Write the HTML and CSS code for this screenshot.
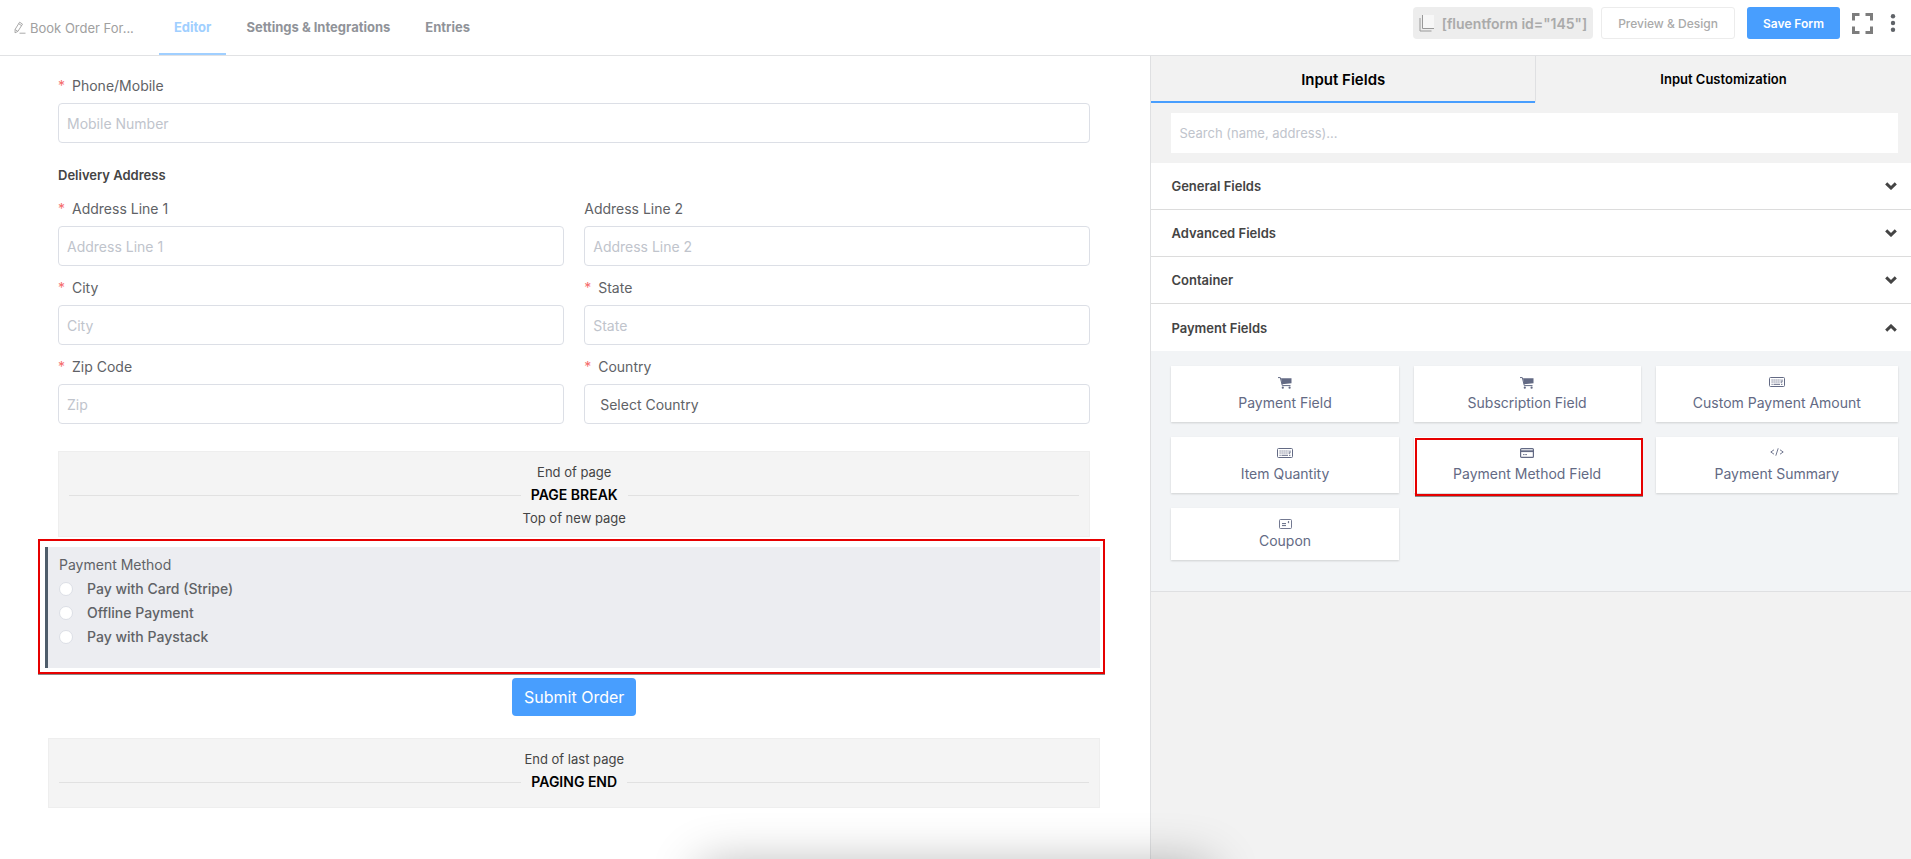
FILE: index.html
```html
<!DOCTYPE html>
<html lang="en">
<head>
    <meta charset="UTF-8">
    <meta name="viewport" content="width=device-width, initial-scale=1.0">
    <title>Book Order Form - Editor</title>
    <link rel="stylesheet" href="styles.css">
</head>
<body>
    <!-- Shared icons -->
    <svg class="icon-defs" width="0" height="0" aria-hidden="true">
        <symbol id="icon-cart" viewBox="0 0 14 12">
            <path d="M0 .6h2.3L4.3 8.6h8.2" fill="none" stroke="currentColor" stroke-width="1"/>
            <path d="M3 1.2h10.5v5L4 7.2z" fill="currentColor"/>
            <circle cx="4.8" cy="10.7" r="1.1" fill="currentColor"/>
            <circle cx="11.6" cy="10.7" r="1.1" fill="currentColor"/>
        </symbol>
        <symbol id="icon-keyboard" viewBox="0 0 16 10">
            <rect x=".5" y=".5" width="15" height="9" rx="1" fill="none" stroke="currentColor"/>
            <path d="M2.5 3h9M2.5 5h9" fill="none" stroke="currentColor" stroke-dasharray="1.2 .8"/>
            <path d="M13 2.5v2.7h-1M2.5 7.3h1.2M4.5 7.3h6.5M12 7.3h1.4" fill="none" stroke="currentColor"/>
        </symbol>
        <symbol id="icon-card" viewBox="0 0 14 10">
            <rect x=".6" y=".6" width="12.8" height="8.8" rx="1" fill="none" stroke="currentColor" stroke-width="1.2"/>
            <path d="M1 3.2h12" stroke="currentColor" stroke-width="1.8"/>
            <path d="M3 6.6h1.6M5.2 6.6h1.8" stroke="currentColor" stroke-width=".9"/>
        </symbol>
        <symbol id="icon-code" viewBox="0 0 14 8">
            <path d="M4 1.8L.8 4 4 6.2M10 1.8L13.2 4 10 6.2M8.2.3L5.8 7.7" fill="none" stroke="currentColor" stroke-width=".9"/>
        </symbol>
        <symbol id="icon-coupon" viewBox="0 0 13 10">
            <rect x=".5" y=".5" width="12" height="9" rx="1" fill="none" stroke="currentColor" stroke-width=".9"/>
            <path d="M3 4.6h4M3 6.6h4" stroke="currentColor" stroke-width="1"/>
            <path d="M9.6 2v2.2M8.8 3.2h1" stroke="currentColor" stroke-width=".9"/>
        </symbol>
        <symbol id="icon-chevron" viewBox="0 0 12 8">
            <path d="M1.2 1.4L6 6l4.8-4.6" fill="none" stroke="currentColor" stroke-width="3"/>
        </symbol>
    </svg>

    <header class="topbar">
        <button class="form-name" type="button">
            <svg width="12" height="13" viewBox="0 0 12 13" fill="none" stroke="currentColor" stroke-width=".9">
                <path d="M5.6 1.2l2.9 1.9-4.6 7.3-2.9 1.4.1-3.4zM4.7 2.7l2.8 1.9M1.2 8.6l2.6 1.7M5.5 12.2h6"/>
            </svg>
            Book Order For...
        </button>
        <nav class="topnav">
            <a class="topnav-link active" href="#">Editor</a>
            <a class="topnav-link" href="#">Settings &amp; Integrations</a>
            <a class="topnav-link" href="#">Entries</a>
        </nav>
        <div class="actions">
            <button class="shortcode" type="button">
                <svg width="16" height="18" viewBox="0 0 16 18">
                    <path d="M4 1h11v13H4z" fill="#f7f7f7"/>
                    <path d="M3.5 1v13.5H15M1 4v13h11.5" fill="none" stroke="#999" stroke-width="1"/>
                </svg>
                [fluentform id="145"]
            </button>
            <button class="btn btn-plain" type="button">Preview &amp; Design</button>
            <button class="btn btn-primary" type="button">Save Form</button>
            <button class="icon-btn" type="button" aria-label="Full screen">
                <svg width="21" height="21" viewBox="0 0 21 21" fill="none" stroke="#7d7d7d" stroke-width="3">
                    <path d="M1.5 7.5v-6h6M13.5 1.5h6v6M19.5 13.5v6h-6M7.5 19.5h-6v-6"/>
                </svg>
            </button>
            <button class="icon-btn" type="button" aria-label="More">
                <svg width="6" height="18" viewBox="0 0 6 18" fill="#5f6368">
                    <circle cx="3" cy="2.3" r="2.2"/><circle cx="3" cy="9" r="2.2"/><circle cx="3" cy="15.7" r="2.2"/>
                </svg>
            </button>
        </div>
    </header>

    <main class="workspace">
        <form class="editor">
            <div class="fields">
                <div class="field">
                    <label class="required" for="phone">Phone/Mobile</label>
                    <input type="text" id="phone" placeholder="Mobile Number">
                </div>

                <h2 class="group-title">Delivery Address</h2>
                <div class="address">
                    <div class="field">
                        <label class="required" for="line1">Address Line 1</label>
                        <input type="text" id="line1" placeholder="Address Line 1">
                    </div>
                    <div class="field">
                        <label for="line2">Address Line 2</label>
                        <input type="text" id="line2" placeholder="Address Line 2">
                    </div>
                    <div class="field">
                        <label class="required" for="city">City</label>
                        <input type="text" id="city" placeholder="City">
                    </div>
                    <div class="field">
                        <label class="required" for="state">State</label>
                        <input type="text" id="state" placeholder="State">
                    </div>
                    <div class="field">
                        <label class="required" for="zip">Zip Code</label>
                        <input type="text" id="zip" placeholder="Zip">
                    </div>
                    <div class="field">
                        <label class="required" for="country">Country</label>
                        <select id="country">
                            <option>Select Country</option>
                        </select>
                    </div>
                </div>

                <div class="page-step">
                    <p>End of page</p>
                    <strong class="step-title">PAGE BREAK</strong>
                    <p>Top of new page</p>
                </div>
            </div>

            <div class="highlight">
                <fieldset class="payment">
                    <legend>Payment Method</legend>
                    <label><input type="radio" name="method">Pay with Card (Stripe)</label>
                    <label><input type="radio" name="method">Offline Payment</label>
                    <label><input type="radio" name="method">Pay with Paystack</label>
                </fieldset>
            </div>

            <button class="submit" type="button">Submit Order</button>

            <div class="page-step page-end">
                <p>End of last page</p>
                <strong class="step-title">PAGING END</strong>
            </div>
        </form>

        <aside class="sidebar">
            <div class="tabs">
                <button class="tab active" type="button">Input Fields</button>
                <button class="tab" type="button">Input Customization</button>
            </div>
            <div class="search">
                <input type="text" aria-label="Search fields" placeholder="Search (name, address)...">
            </div>
            <button class="section" type="button">General Fields
                <svg width="12" height="8"><use href="#icon-chevron"/></svg>
            </button>
            <button class="section" type="button">Advanced Fields
                <svg width="12" height="8"><use href="#icon-chevron"/></svg>
            </button>
            <button class="section" type="button">Container
                <svg width="12" height="8"><use href="#icon-chevron"/></svg>
            </button>
            <button class="section open" type="button">Payment Fields
                <svg width="12" height="8"><use href="#icon-chevron"/></svg>
            </button>
            <div class="cards">
                <button class="card" type="button">
                    <svg width="14" height="12"><use href="#icon-cart"/></svg>
                    Payment Field
                </button>
                <button class="card" type="button">
                    <svg width="14" height="12"><use href="#icon-cart"/></svg>
                    Subscription Field
                </button>
                <button class="card" type="button">
                    <svg width="16" height="10"><use href="#icon-keyboard"/></svg>
                    Custom Payment Amount
                </button>
                <button class="card" type="button">
                    <svg width="16" height="10"><use href="#icon-keyboard"/></svg>
                    Item Quantity
                </button>
                <button class="card marked" type="button">
                    <svg width="14" height="10"><use href="#icon-card"/></svg>
                    Payment Method Field
                </button>
                <button class="card" type="button">
                    <svg width="14" height="8"><use href="#icon-code"/></svg>
                    Payment Summary
                </button>
                <button class="card compact" type="button">
                    <svg width="13" height="10"><use href="#icon-coupon"/></svg>
                    Coupon
                </button>
            </div>
        </aside>
    </main>
    <div class="dock-shadow"></div>
</body>
</html>
```

FILE: styles.css
```css
/* General Styles */
* {
    box-sizing: border-box;
}

body {
    display: flex;
    flex-direction: column;
    min-height: 100vh;
    margin: 0;
    font-family: Inter, "Liberation Sans", sans-serif;
    font-size: 14px;
    color: #606266;
    background: #fff;
    overflow: hidden;
}

button, input, select {
    font: inherit;
    color: inherit;
}

button {
    padding: 0;
    border: none;
    background: none;
    cursor: pointer;
}

p, h2 {
    margin: 0;
}

.icon-defs {
    position: absolute;
}

/* Top Bar */
.topbar {
    display: flex;
    height: 56px;
    padding: 0 15px 0 14px;
    border-bottom: 1px solid #e1e2e4;
    font-size: 13px;
}

.form-name {
    display: flex;
    align-items: center;
    gap: 4px;
    margin-right: 25px;
    color: #a0a0a0;
}

.topnav {
    display: flex;
    gap: 5px;
}

.topnav-link {
    padding: 0 15px;
    line-height: 54px;
    font-weight: 700;
    color: #909399;
    text-decoration: none;
}

.topnav-link.active {
    color: #a0cfff;
    border-bottom: 2px solid #a0cfff;
    height: 55px;
}

.actions {
    display: flex;
    align-items: center;
    gap: 8px;
    height: 46px;
    margin-left: auto;
}

.shortcode {
    display: flex;
    align-items: center;
    gap: 7px;
    height: 32px;
    padding: 0 6px;
    border-radius: 4px;
    background: #ededed;
    color: #aaa;
    font-size: 14px;
    font-weight: 600;
}

.btn {
    height: 32px;
    padding: 0 16px;
    border-radius: 3px;
    font-size: 12px;
    font-weight: 500;
}

.btn-plain {
    border: 1px solid #ececec;
    color: #aaa;
}

.btn-primary {
    margin: 0 4px;
    background: #489efe;
    color: #fff;
    font-weight: 600;
}

.icon-btn {
    display: flex;
    margin-right: 9px;
}

.icon-btn:last-child {
    margin-right: 0;
}

/* Workspace */
.workspace {
    display: flex;
    flex: 1;
}

.editor {
    flex: 1;
    padding: 20px 50px 0 48px;
}

.fields {
    padding: 0 10px;
}

.field {
    display: flex;
    flex-direction: column;
    gap: 7px;
}

.field label {
    line-height: 20px;
}

.required::before {
    content: "*";
    display: inline-block;
    width: 14px;
    color: #f56c6c;
}

.field input, .field select {
    width: 100%;
    height: 40px;
    padding: 0 8px;
    border: 1px solid #dcdfe6;
    border-radius: 4px;
    background: #fff;
}

.field select {
    appearance: none;
    padding: 0 15px;
}

input::placeholder {
    color: #c0c4cc;
    opacity: 1;
}

.group-title {
    margin: 22px 0 14px;
    font-size: 13px;
    line-height: 20px;
    font-weight: 600;
    color: #444;
}

.address {
    display: grid;
    grid-template-columns: 1fr 1fr;
    gap: 12px 20px;
}

/* Page Steps */
.page-step {
    margin-top: 27px;
    padding: 9px 10px 7px;
    border: 1px solid #eee;
    background: #f4f4f4;
    color: #444;
    font-size: 13px;
    line-height: 22px;
    text-align: center;
}

.step-title {
    display: flex;
    align-items: center;
    gap: 10px;
    font-size: 14px;
    font-weight: 600;
    line-height: 24px;
    color: #000;
}

.step-title::before, .step-title::after {
    content: "";
    flex: 1;
    height: 1px;
    background: #e1e1e1;
}

.page-end {
    margin-top: 22px;
    padding-bottom: 13px;
}

/* Payment Method */
.highlight {
    margin: 2px -5px 0 -10px;
    padding: 6px 3px 4px 5px;
    border: 2px solid #e60000;
    box-shadow: 0 1px 0 #8a8a8a;
}

.payment {
    display: flex;
    flex-direction: column;
    min-height: 121px;
    margin: 0;
    padding: 6px 11px;
    border: none;
    border-left: 3px solid #4f5d6b;
    background: #ecedf1;
}

.payment legend {
    float: left;
    padding: 0;
    line-height: 24px;
}

.payment label {
    display: flex;
    align-items: center;
    gap: 14px;
    line-height: 24px;
    font-weight: 500;
}

.payment input {
    appearance: none;
    width: 14px;
    height: 14px;
    margin: 0;
    border: 1px solid #dcdfe6;
    border-radius: 50%;
    background: #fff;
}

.submit {
    display: block;
    height: 38px;
    margin: 4px auto 0;
    padding: 0 12px;
    border-radius: 4px;
    background: #489efe;
    color: #fff;
    font-size: 16px;
}

/* Sidebar */
.sidebar {
    width: 39.8%;
    border-left: 1px solid #dfe0e2;
    background: #f2f2f2;
}

.tabs {
    display: grid;
    grid-template-columns: 50.5% 1fr;
    height: 47px;
}

.tab {
    padding-top: 1px;
    border-bottom: 2px solid transparent;
    font-size: 13px;
    font-weight: 600;
    color: #000;
}

.tab.active {
    border-bottom-color: #489efe;
    font-size: 15px;
}

.tab + .tab {
    border-left: 1px solid #dfe0e2;
}

.search {
    padding: 10px 13px 10px 20px;
}

.search input {
    display: block;
    width: 100%;
    height: 40px;
    padding: 0 8px;
    border: none;
    background: #fff;
    font-size: 13px;
}

.section {
    display: flex;
    align-items: center;
    justify-content: space-between;
    width: 100%;
    height: 47px;
    padding: 0 14px 0 20px;
    border-bottom: 1px solid #dcdcdc;
    background: #fff;
    font-size: 13px;
    font-weight: 600;
    color: #444;
}

.section.open {
    border-bottom: none;
}

.section.open svg {
    transform: rotate(180deg);
}

.cards {
    display: grid;
    grid-template-columns: 15fr 15fr 16fr;
    gap: 15px;
    padding: 15px 13px 31px 20px;
    border-bottom: 1px solid #dfe0e2;
    background: #f2f4f6;
}

.card {
    position: relative;
    display: flex;
    flex-direction: column;
    align-items: center;
    justify-content: space-between;
    height: 56px;
    padding: 11px 5px 9px;
    background: #fff;
    box-shadow: 0 1px 2px rgba(0, 0, 0, 0.15);
    color: #636a84;
    line-height: 20px;
}

.card.compact {
    height: 52px;
}

/* Red frame over the card */
.marked::after {
    content: "";
    position: absolute;
    inset: 1px -2px -3px 1px;
    border: 2px solid #e60000;
    box-shadow: 0 1px 0 #8a8a8a;
}

/* Soft shadow rising from the bottom edge */
.dock-shadow {
    position: fixed;
    top: 100%;
    left: 37%;
    width: 26%;
    height: 60px;
    margin-top: 12px;
    box-shadow: 0 0 50px 6px rgba(0, 0, 0, 0.3);
}
```
